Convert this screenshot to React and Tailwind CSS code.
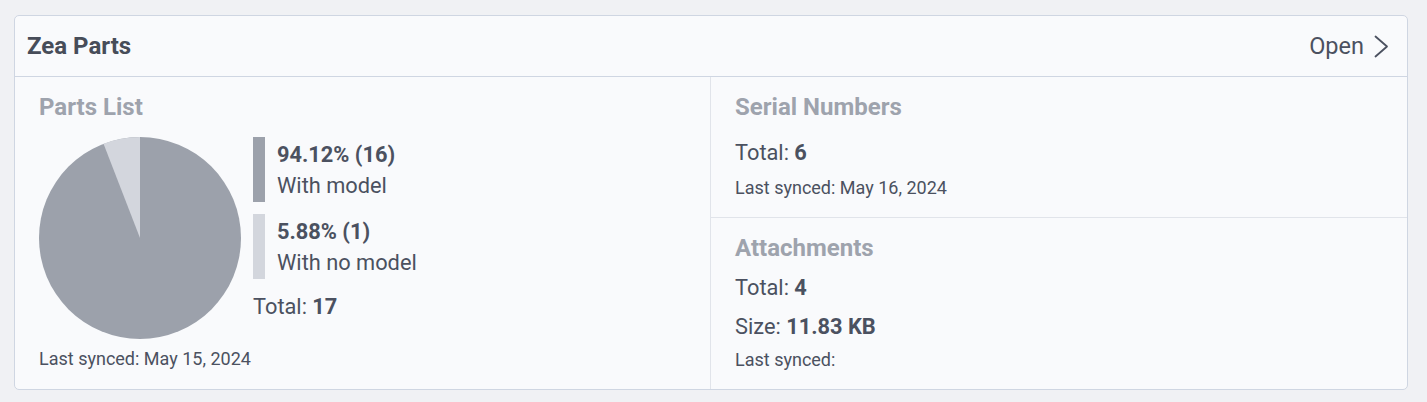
const font = { fontFamily: "Roboto, 'Noto Sans', sans-serif" };

function Pie() {
  // 5.88% slice from 12 o'clock going counter-clockwise
  const r = 101;
  const cx = 101;
  const cy = 101;
  const a = 0.0588 * Math.PI * 2;
  const x = cx - r * Math.sin(a);
  const y = cy - r * Math.cos(a);
  return (
    <svg width="202" height="202" viewBox="0 0 202 202" className="block">
      <circle cx={cx} cy={cy} r={r} fill="#9ca1ab" />
      <path d={`M${cx} ${cy} L${cx} ${cy - r} A${r} ${r} 0 0 0 ${x} ${y} Z`} fill="#d3d6dd" />
    </svg>
  );
}

function LegendItem({ color, value, label }) {
  return (
    <div className="flex flex-row gap-[12px]">
      <div className={`w-[12px] ${color}`} />
      <div className="flex flex-col pt-[2px] pb-[1px]">
        <span className="text-[21.8px] leading-[31px] font-bold">{value}</span>
        <span className="text-[21.8px] leading-[31px]">{label}</span>
      </div>
    </div>
  );
}

export default function App() {
  return (
    <div className="min-h-[402px] bg-[#f0f1f4] pl-[14px] pr-[19px] pt-[15px] pb-[12px] text-[#4b5160]" style={font}>
      <div className="rounded-[5px] border border-[#cfd6e2] bg-[#f9fafc]">
        <div className="flex flex-row items-center justify-between h-[61px] pl-[12px] pr-[18px] border-b border-[#cfd6e2]">
          <span className="text-[24px] font-bold leading-[28px] text-[#474d59]">Zea Parts</span>
          <span className="flex flex-row items-center gap-[10px] text-[23.5px] leading-[28px]">
            Open
            <svg width="15" height="23" viewBox="0 0 15 23" fill="none" stroke="#4b5160" strokeWidth="1.8" strokeLinecap="round" strokeLinejoin="round">
              <polyline points="1.5,1.5 13,11.5 1.5,21.5" />
            </svg>
          </span>
        </div>
        <div className="flex flex-row h-[312px]">
          <div className="w-[696px] border-r border-[#e1e4ea] pl-[24px] pt-[16px]">
            <div className="text-[24px] leading-[28px] font-bold text-[#9ea3ad]">Parts List</div>
            <div className="flex flex-row gap-[12px] mt-[16px]">
              <Pie />
              <div className="flex flex-col">
                <LegendItem color="bg-[#9ca1ab]" value="94.12% (16)" label="With model" />
                <div className="mt-[12px]">
                  <LegendItem color="bg-[#d3d6dd]" value="5.88% (1)" label="With no model" />
                </div>
                <div className="mt-[12px] text-[21.8px] leading-[31px]">
                  Total: <span className="font-bold">17</span>
                </div>
              </div>
            </div>
            <div className="mt-[9px] text-[18px] leading-[22px]">Last synced: May 15, 2024</div>
          </div>
          <div className="flex-1 flex flex-col">
            <div className="h-[141px] border-b border-[#e1e4ea] pl-[24px] pt-[16px]">
              <div className="text-[24px] leading-[28px] font-bold text-[#9ea3ad]">Serial Numbers</div>
              <div className="mt-[18px] text-[21.8px] leading-[28px]">
                Total: <span className="font-bold">6</span>
              </div>
              <div className="mt-[10px] text-[18px] leading-[22px]">Last synced: May 16, 2024</div>
            </div>
            <div className="flex-1 pl-[24px] pt-[16px]">
              <div className="text-[24px] leading-[28px] font-bold text-[#9ea3ad]">Attachments</div>
              <div className="mt-[12px] text-[21.8px] leading-[28px]">
                Total: <span className="font-bold">4</span>
              </div>
              <div className="mt-[11px] text-[21.8px] leading-[28px]">
                Size: <span className="font-bold">11.83 KB</span>
              </div>
              <div className="mt-[8px] text-[18px] leading-[22px]">Last synced:</div>
            </div>
          </div>
        </div>
      </div>
    </div>
  );
}
